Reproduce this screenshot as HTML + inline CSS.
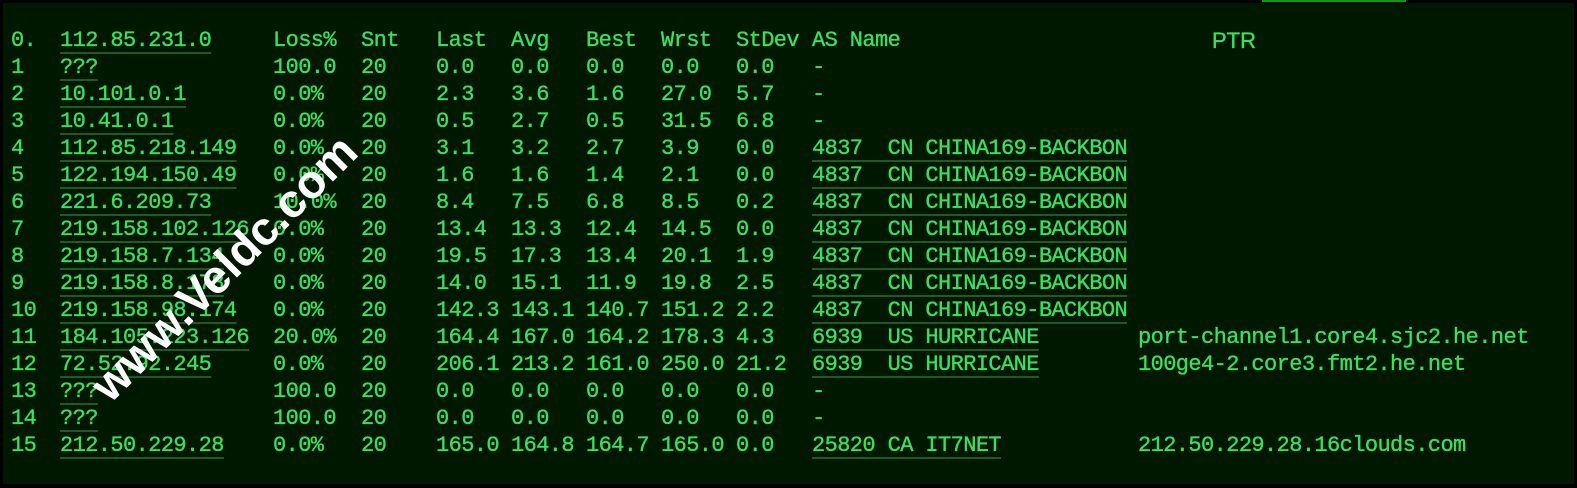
<!DOCTYPE html>
<html><head><meta charset="utf-8"><style>
html,body{margin:0;padding:0;background:#000;}
#f{position:absolute;left:3px;top:3px;width:1571px;height:481px;background:#001800;overflow:hidden;}
#bar{position:absolute;left:1262px;top:0;width:144px;height:2px;background:#0a9a1a;}
.r{position:absolute;left:0;height:27px;line-height:27px;font-family:"Liberation Mono",monospace;font-size:22px;letter-spacing:-0.6px;color:#3be05c;-webkit-text-stroke:0.35px #3be05c;white-space:pre;}
.r span{position:absolute;top:0;}
.u{text-decoration:underline;text-decoration-color:#1f5a25;text-decoration-thickness:2px;text-underline-offset:6px;}
.p{font-family:"Liberation Sans",sans-serif;letter-spacing:0;}
#wm{position:absolute;font-family:"Liberation Sans",sans-serif;font-weight:bold;font-size:47px;color:#fff;transform:rotate(-45deg);transform-origin:0 0;white-space:nowrap;line-height:1;}
</style></head><body>
<div id="f"></div>
<div id="bar"></div>
<div id="rows"></div>
<script>
var d=[
["0.","112.85.231.0","Loss%","Snt","Last","Avg","Best","Wrst","StDev","AS Name","PTR"],
["1","???","100.0","20","0.0","0.0","0.0","0.0","0.0","-",""],
["2","10.101.0.1","0.0%","20","2.3","3.6","1.6","27.0","5.7","-",""],
["3","10.41.0.1","0.0%","20","0.5","2.7","0.5","31.5","6.8","-",""],
["4","112.85.218.149","0.0%","20","3.1","3.2","2.7","3.9","0.0","4837  CN CHINA169-BACKBON",""],
["5","122.194.150.49","0.0%","20","1.6","1.6","1.4","2.1","0.0","4837  CN CHINA169-BACKBON",""],
["6","221.6.209.73","10.0%","20","8.4","7.5","6.8","8.5","0.2","4837  CN CHINA169-BACKBON",""],
["7","219.158.102.126","0.0%","20","13.4","13.3","12.4","14.5","0.0","4837  CN CHINA169-BACKBON",""],
["8","219.158.7.134","0.0%","20","19.5","17.3","13.4","20.1","1.9","4837  CN CHINA169-BACKBON",""],
["9","219.158.8.178","0.0%","20","14.0","15.1","11.9","19.8","2.5","4837  CN CHINA169-BACKBON",""],
["10","219.158.98.174","0.0%","20","142.3","143.1","140.7","151.2","2.2","4837  CN CHINA169-BACKBON",""],
["11","184.105.223.126","20.0%","20","164.4","167.0","164.2","178.3","4.3","6939  US HURRICANE","port-channel1.core4.sjc2.he.net"],
["12","72.52.92.245","0.0%","20","206.1","213.2","161.0","250.0","21.2","6939  US HURRICANE","100ge4-2.core3.fmt2.he.net"],
["13","???","100.0","20","0.0","0.0","0.0","0.0","0.0","-",""],
["14","???","100.0","20","0.0","0.0","0.0","0.0","0.0","-",""],
["15","212.50.229.28","0.0%","20","165.0","164.8","164.7","165.0","0.0","25820 CA IT7NET","212.50.229.28.16clouds.com"]];
var xs=[11,60,273,361,436,511,586,661,736,812,1138];
var h="";
d.forEach(function(r,i){
 h+='<div class="r" style="top:'+(27+27*i)+'px">';
 r.forEach(function(c,j){
  if(!c)return;
  var cls="";
  if(j==1)cls="u";
  if(j==9&&i>0&&c!="-")cls="u";
  var x=xs[j];
  if(i==0&&j==10){x=1212;cls="p";}
  h+='<span class="'+cls+'" style="left:'+x+'px">'+c+'</span>';
 });
 h+='</div>';
});
document.getElementById("rows").innerHTML=h;
</script>
<div id="wm" style="top:376px;left:82px;">www.Veldc.com</div>
</body></html>
